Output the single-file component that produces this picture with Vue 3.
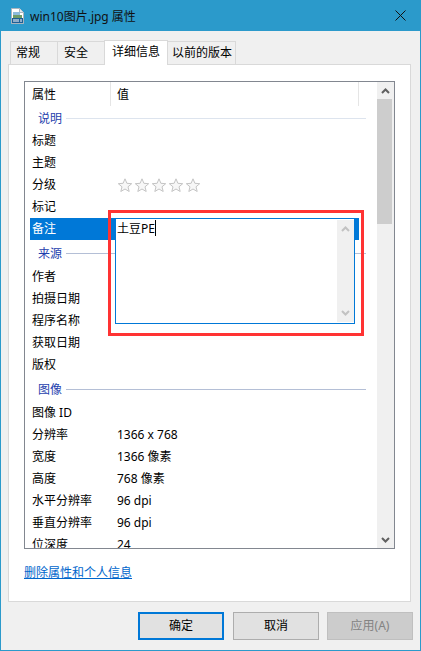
<script setup>
const tabs = [
  { name: "常规", cls: "t1" },
  { name: "安全", cls: "t2" },
  { name: "详细信息", cls: "t3 active" },
  { name: "以前的版本", cls: "t4" },
];

const rows = [
  { type: "group", name: "说明", h: 24, light: true },
  { name: "标题" },
  { name: "主题" },
  { name: "分级", stars: true },
  { name: "标记" },
  { name: "备注", selected: true },
  { type: "group", name: "来源", h: 26 },
  { name: "作者" },
  { name: "拍摄日期" },
  { name: "程序名称" },
  { name: "获取日期" },
  { name: "版权" },
  { type: "group", name: "图像", h: 26 },
  { name: "图像 ID" },
  { name: "分辨率", value: "1366 x 768" },
  { name: "宽度", value: "1366 像素" },
  { name: "高度", value: "768 像素" },
  { name: "水平分辨率", value: "96 dpi" },
  { name: "垂直分辨率", value: "96 dpi" },
  { name: "位深度", value: "24" },
];
</script>

<template>
  <div class="window">
    <div class="titlebar">
      <svg class="file-icon" width="13" height="16" viewBox="0 0 13 16">
        <path d="M.5 .5h8l4 4v11H.5z" fill="#fff" stroke="#aab4bd" />
        <path d="M8.5 .5v4h4" fill="#e3e9ef" stroke="#aab4bd" />
        <rect x="2" y="4" width="7" height="3" fill="#8dbbdc" />
        <rect x="2" y="7" width="9" height="3" fill="#6f9c68" />
        <rect x="1" y="10" width="11" height="5" fill="#1f5f96" />
        <path d="M3 11v3M5 11v3M7 11v3M10 11v3" stroke="#fff" />
      </svg>
      <span class="title">win10图片.jpg 属性</span>
      <svg class="close" width="11" height="11" viewBox="0 0 11 11">
        <path d="M.5 .5l10 10M10.5 .5l-10 10" stroke="#111" fill="none" />
      </svg>
    </div>

    <div class="tabs">
      <div v-for="tab in tabs" :key="tab.name" class="tab" :class="tab.cls">{{ tab.name }}</div>
    </div>

    <div class="panel">
      <div class="listbox">
        <div class="list">
          <div class="list-head">
            <div class="col-name">属性</div>
            <div class="col-value">值</div>
            <div class="col-end"></div>
          </div>
          <template v-for="row in rows" :key="row.name">
            <div v-if="row.type === 'group'" class="group" :class="{ light: row.light }" :style="{ height: row.h + 'px' }">
              <span>{{ row.name }}</span>
              <i></i>
            </div>
            <div v-else class="row" :class="{ selected: row.selected }">
              <div class="key">{{ row.name }}</div>
              <div class="val">
                <div v-if="row.stars" class="stars">
                  <svg v-for="n in 5" :key="n" width="17" height="14" viewBox="0 0 17 14">
                    <path d="M8 .8l1.9 4.5 4.8.4-3.7 3.1 1.2 4.7L8 11l-4.2 2.5L5 8.8 1.3 5.7l4.8-.4z" fill="#f7f7f7" stroke="#c4c4c4" />
                  </svg>
                </div>
                <template v-else>{{ row.value }}</template>
              </div>
              <div v-if="row.selected" class="editor">
                <div class="editor-text">土豆PE<span class="caret"></span></div>
                <div class="editor-scroll">
                  <svg width="9" height="6" viewBox="0 0 9 6"><path d="M1 5l3.5-3.5L8 5" fill="none" stroke="#c2c2c2" stroke-width="2" /></svg>
                  <svg width="9" height="6" viewBox="0 0 9 6"><path d="M1 1l3.5 3.5L8 1" fill="none" stroke="#c2c2c2" stroke-width="2" /></svg>
                </div>
              </div>
            </div>
          </template>
        </div>
        <div class="scrollbar">
          <div class="arrow">
            <svg width="9" height="6" viewBox="0 0 9 6"><path d="M1 5l3.5-3.5L8 5" fill="none" stroke="#606060" stroke-width="2" /></svg>
          </div>
          <div class="thumb"></div>
          <div class="track"></div>
          <div class="arrow">
            <svg width="9" height="6" viewBox="0 0 9 6"><path d="M1 1l3.5 3.5L8 1" fill="none" stroke="#606060" stroke-width="2" /></svg>
          </div>
        </div>
      </div>
      <a class="link">删除属性和个人信息</a>
    </div>

    <div class="footer">
      <div class="btn primary">确定</div>
      <div class="btn">取消</div>
      <div class="btn disabled">应用(A)</div>
    </div>

    <div class="highlight"></div>
  </div>
</template>

<style>
html,
body {
  margin: 0;
  background: #f0f0f0;
}
</style>

<style scoped>
.window {
  position: relative;
  box-sizing: border-box;
  width: 421px;
  height: 651px;
  display: flex;
  flex-direction: column;
  background: #f0f0f0;
  border: 1px solid #2b9acb;
  border-top: none;
  font-family: "Noto Sans", "Noto Sans CJK SC", sans-serif;
  font-size: 12px;
  color: #000;
  overflow: hidden;
}

.titlebar {
  height: 31px;
  flex: none;
  display: flex;
  align-items: center;
  background: #2b9acb;
  margin: 0 -1px;
  padding: 0 15px 0 11px;
}

.file-icon {
  flex: none;
}

.title {
  margin-left: 6px;
  flex: 1;
  font-size: 12px;
  color: #111;
}

.tabs {
  display: flex;
  align-items: flex-end;
  height: 34px;
  flex: none;
  padding-left: 9px;
  position: relative;
  z-index: 1;
  margin-bottom: -1px;
}

.tab {
  box-sizing: border-box;
  height: 23px;
  line-height: 21px;
  padding-left: 6px;
  background: #f0f0f0;
  border: 1px solid #d9d9d9;
  border-bottom: none;
  margin-right: -1px;
  margin-bottom: 1px;
}

.t1 {
  width: 48px;
  padding-left: 5px;
}

.t2 {
  width: 48px;
}

.t3 {
  width: 64px;
  padding-left: 7px;
}

.t4 {
  width: 69px;
  padding-left: 4px;
}

.tab.active {
  height: 25px;
  line-height: 22px;
  background: #fff;
  margin-bottom: 0;
  position: relative;
  z-index: 1;
}

.panel {
  box-sizing: border-box;
  width: 403px;
  height: 538px;
  flex: none;
  margin-left: 7px;
  padding: 16px 15px 0;
  background: #fff;
  border: 1px solid #d9d9d9;
}

.listbox {
  box-sizing: border-box;
  width: 371px;
  height: 468px;
  display: flex;
  border: 1px solid #828790;
  background: #fff;
  overflow: hidden;
}

.list {
  flex: 1;
  min-width: 0;
  padding-left: 5px;
}

.list-head {
  display: flex;
  height: 24px;
  align-items: stretch;
  line-height: 26px;
}

.col-name {
  width: 81px;
  padding-left: 2px;
  box-sizing: border-box;
  border-right: 1px solid #e5e5e5;
}

.col-value {
  width: 248px;
  padding-left: 6px;
  box-sizing: border-box;
  border-right: 1px solid #e5e5e5;
}

.group {
  display: flex;
  align-items: center;
  width: 336px;
  padding-left: 8px;
  box-sizing: border-box;
  color: #1f3fae;
}

.group i {
  flex: 1;
  height: 1px;
  margin-left: 4px;
  background: #b4bfd6;
}

.group.light i {
  background: #dde4ee;
}

.row {
  position: relative;
  display: flex;
  width: 329px;
  height: 22px;
  line-height: 22px;
}

.row.selected {
  background: #0078d7;
  color: #fff;
}

.key {
  width: 87px;
  flex: none;
  padding-left: 2px;
  box-sizing: border-box;
}

.val {
  flex: 1;
}

.stars {
  display: flex;
  height: 22px;
  align-items: center;
}

.editor {
  position: absolute;
  left: 85px;
  top: 0;
  width: 240px;
  height: 106px;
  box-sizing: border-box;
  border: 1px solid #0078d7;
  background: #fff;
  color: #000;
  display: flex;
}

.editor-text {
  flex: 1;
  padding-left: 1px;
  line-height: 20px;
}

.caret {
  display: inline-block;
  width: 1px;
  height: 16px;
  background: #000;
  vertical-align: -3px;
}

.editor-scroll {
  width: 17px;
  margin: 1px 0;
  background: #f0f0f0;
  display: flex;
  flex-direction: column;
  justify-content: space-between;
  align-items: center;
  padding: 6px 0;
  box-sizing: border-box;
}

.scrollbar {
  width: 17px;
  flex: none;
  display: flex;
  flex-direction: column;
  background: #f0f0f0;
}

.arrow {
  height: 17px;
  flex: none;
  display: flex;
  align-items: center;
  justify-content: center;
}

.thumb {
  height: 125px;
  flex: none;
  width: 15px;
  background: #cdcdcd;
}

.track {
  flex: 1;
}

.link {
  display: block;
  margin-top: 14px;
  color: #0066cc;
  text-decoration: underline;
}

.footer {
  display: flex;
  justify-content: flex-end;
  gap: 8px;
  padding: 10px 7px 0 0;
}

.btn {
  box-sizing: border-box;
  width: 86px;
  height: 28px;
  line-height: 26px;
  text-align: center;
  background: #e1e1e1;
  border: 1px solid #adadad;
}

.btn.primary {
  border: 2px solid #0078d7;
  line-height: 24px;
  margin-right: 1px;
}

.btn.disabled {
  background: #cccccc;
  border-color: #bfbfbf;
  color: #838383;
}

.highlight {
  position: absolute;
  left: 107px;
  top: 210px;
  width: 256px;
  height: 126px;
  box-sizing: border-box;
  border: 3px solid #ff3333;
  pointer-events: none;
}
</style>
